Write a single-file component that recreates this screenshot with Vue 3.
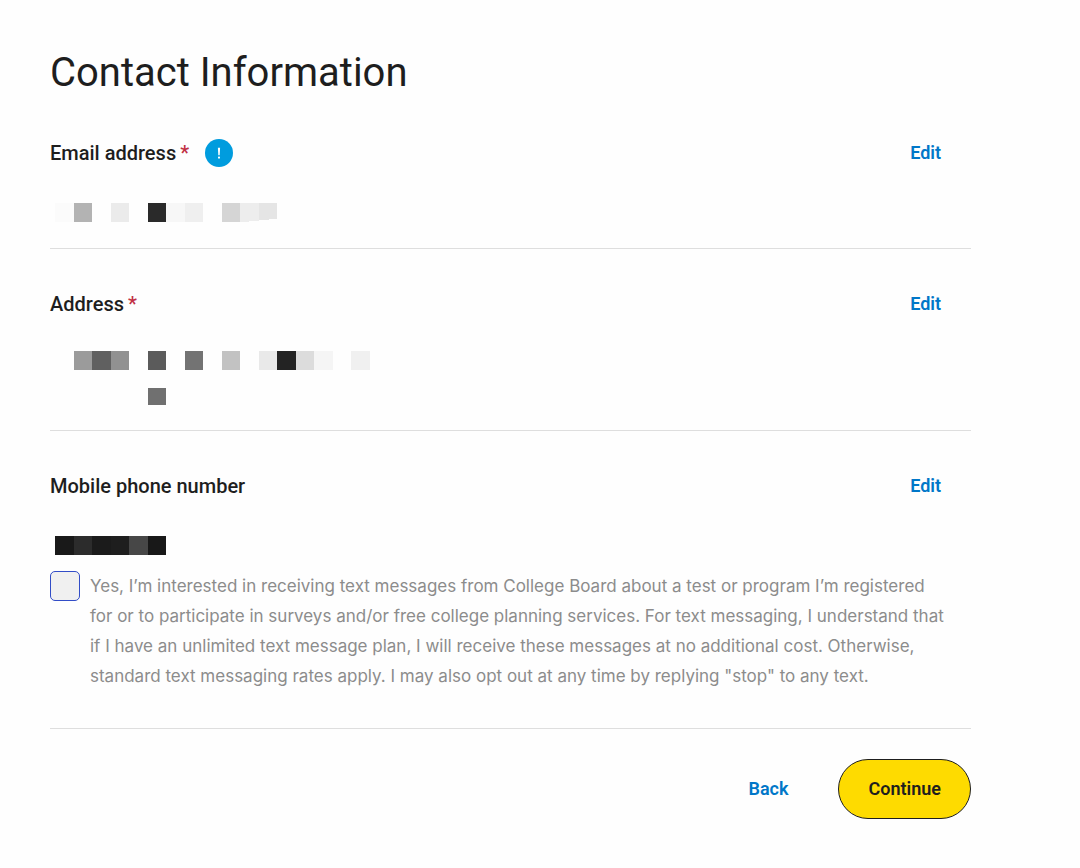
<script setup>
import { ref } from 'vue'

const agreed = ref(false)

// Masked values are drawn as square cells; each entry is [column, row, fill].
const emailCells = [
  [0, 0, '#fbfbfb'], [1, 0, '#b3b3b3'], [3, 0, '#ebebeb'], [5, 0, '#2a2a2a'], [6, 0, '#f7f7f7'],
  [7, 0, '#efefef'], [9, 0, '#d5d5d5'], [10, 0, '#ededed'], [11, 0, '#e5e5e5'],
]
const addressCells = [
  [1, 0, '#9b9b9b'], [2, 0, '#606060'], [3, 0, '#919191'], [5, 0, '#5b5b5b'], [7, 0, '#737373'],
  [9, 0, '#c2c2c2'], [11, 0, '#e9e9e9'], [12, 0, '#232323'], [13, 0, '#dcdcdc'], [14, 0, '#f5f5f5'],
  [16, 0, '#f0f0f0'], [5, 2, '#707070'],
]
const phoneCells = [
  [0, 0, '#191919'], [1, 0, '#2c2c2c'], [2, 0, '#1b1b1b'], [3, 0, '#1e1e1e'], [4, 0, '#474747'],
  [5, 0, '#181818'],
]
</script>

<template>
  <main class="page">
    <h1 class="title">Contact Information</h1>

    <section class="field email-field">
      <header class="head">
        <h2 class="label">Email address<span class="required">*</span></h2>
        <button class="info" type="button" aria-label="More information">
          <svg viewBox="0 0 28 28" width="28" height="28" aria-hidden="true">
            <circle cx="14" cy="14" r="14" fill="#009cde" />
            <path d="M12.9 8.8h2.2l-.4 7.4h-1.4z" fill="#fff" />
            <rect x="13" y="17.6" width="2" height="2" rx=".6" fill="#fff" />
          </svg>
        </button>
        <button class="link edit" type="button">Edit</button>
      </header>
      <svg class="masked email" viewBox="0 0 36 2" width="333" aria-hidden="true">
        <rect v-for="[c, r, f] in emailCells" :key="c + '-' + r" :x="c * 2" :y="r * 2" width="2" height="2" :fill="f" />
        <path d="M21 2.1V2L24 1.7V2.1z" fill="#fefefe" />
      </svg>
    </section>

    <section class="field address-field">
      <header class="head">
        <h2 class="label">Address<span class="required">*</span></h2>
        <button class="link edit" type="button">Edit</button>
      </header>
      <svg class="masked" viewBox="0 0 36 6" width="333" aria-hidden="true">
        <rect v-for="[c, r, f] in addressCells" :key="c + '-' + r" :x="c * 2" :y="r * 2" width="2" :height="r ? 1.8 : 2" :fill="f" />
      </svg>
    </section>

    <section class="field phone-field">
      <header class="head">
        <h2 class="label">Mobile phone number</h2>
        <button class="link edit" type="button">Edit</button>
      </header>
      <svg class="masked phone" viewBox="0 0 36 2" width="333" aria-hidden="true">
        <rect v-for="[c, r, f] in phoneCells" :key="c + '-' + r" :x="c * 2" :y="r * 2" width="2" height="2" :fill="f" />
      </svg>
      <div class="consent">
        <input id="consent" v-model="agreed" class="tick" type="checkbox" />
        <label class="terms" for="consent">Yes, I’m interested in receiving text messages from College Board about a test or program I’m registered for or to participate in surveys and/or free college planning services. For text messaging, I understand that if I have an unlimited text message plan, I will receive these messages at no additional cost. Otherwise, standard text messaging rates apply. I may also opt out at any time by replying "stop" to any text.</label>
      </div>
    </section>

    <footer class="actions">
      <button class="link" type="button">Back</button>
      <button class="continue" type="button">Continue</button>
    </footer>
  </main>
</template>

<style>
body {
  background: #fefefe;
}
</style>

<style scoped>
.page {
  padding: 48px 109px 48px 50px;
  color: #1e1e1e;
  font-family: Roboto, "Liberation Sans", sans-serif;
}

.title {
  margin: 0;
  font-size: 40px;
  font-weight: 400;
  line-height: 50px;
}

.field {
  padding: 40px 0 25px;
  border-bottom: 1px solid #dedede;
}

.head {
  display: flex;
  align-items: center;
  height: 30px;
}

.label {
  margin: 0;
  font-size: 20px;
  font-weight: 500;
  line-height: 30px;
}

.required {
  margin-left: 4px;
  color: #c13145;
}

button {
  padding: 0;
  border: 0;
  background: none;
  font-family: inherit;
  font-size: 18px;
  font-weight: 600;
  line-height: 30px;
  cursor: pointer;
}

.info {
  display: flex;
  margin-left: 16px;
}

.link {
  color: #0077c8;
}

.edit {
  margin: 0 30px 0 auto;
}

.masked {
  display: block;
  margin: 32px 0 0 5px;
  shape-rendering: crispEdges;
}

.masked.email {
  margin-top: 35px;
}

.masked.phone {
  margin-top: 35px;
}

.email-field {
  padding-bottom: 26px;
}

.address-field {
  padding-bottom: 24px;
}

.phone-field {
  padding-bottom: 37px;
}

.consent {
  display: flex;
  align-items: flex-start;
  gap: 10px;
  margin-top: 16px;
}

.tick {
  flex: none;
  width: 30px;
  height: 30px;
  margin: 0;
  border: 1px solid #324dc7;
  border-radius: 5px;
  background: #f0f0f0;
  appearance: none;
}

.tick:checked {
  background: #324dc7;
}

.terms {
  padding-right: 20px;
  color: #8c8c8c;
  font-family: Inter, "Liberation Sans", sans-serif;
  font-size: 17px;
  line-height: 30px;
}

.actions {
  display: flex;
  justify-content: flex-end;
  align-items: center;
  gap: 50px;
  margin-top: 30px;
}

.continue {
  padding: 14px 29px;
  border: 1px solid #1e1e1e;
  border-radius: 30px;
  background: #fedb00;
  color: #1e1e1e;
}
</style>
